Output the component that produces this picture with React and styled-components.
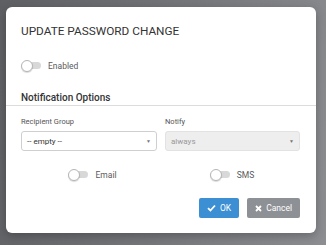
import React, { useState } from 'react';
import styled, { createGlobalStyle } from 'styled-components';

const GlobalStyle = createGlobalStyle`
    html, body {
        margin: 0;
        padding: 0;
        width: 326px;
        height: 245px;
        overflow: hidden;
    }
    body {
        background: linear-gradient(100deg, #5e5f63 0%, #77787c 55%, #8d8e92 100%);
        font-family: Roboto, "Liberation Sans", sans-serif;
    }
`;

const Overlay = styled.div`
    padding: 7px 10px 12px 6px;
`;

const Modal = styled.div`
    width: 310px;
    height: 226px;
    box-sizing: border-box;
    background: #fff;
    border-radius: 6px;
    box-shadow: 0 3px 10px rgba(0, 0, 0, 0.25);
    display: flex;
    flex-direction: column;
`;

const Title = styled.h3`
    margin: 0;
    padding: 16px 15px 0;
    font-size: 11.8px;
    line-height: 16px;
    font-weight: 400;
    color: #333;
`;

const ToggleRow = styled.div`
    display: flex;
    align-items: center;
    gap: 7px;
    padding: ${({ pad }) => pad || '0'};
    justify-content: ${({ center }) => (center ? 'center' : 'flex-start')};
`;

const Track = styled.span`
    position: relative;
    display: inline-block;
    width: 20px;
    height: 11px;
`;

const TrackBar = styled.span`
    position: absolute;
    left: 2px;
    right: 0;
    top: 2px;
    height: 7px;
    border-radius: 4px;
    background: #d8d8d8;
`;

const Knob = styled.span`
    position: absolute;
    left: 0;
    top: 0;
    width: 10px;
    height: 10px;
    border-radius: 50%;
    background: #fff;
    border: 0.5px solid #b5b5b5;
    box-shadow: 0 1px 1px rgba(0, 0, 0, 0.15);
`;

const ToggleLabel = styled.span`
    font-size: 8.5px;
    color: #5a5a5a;
`;

const SectionTitle = styled.div`
    padding: 21px 15px 1px;
    font-size: 10px;
    font-weight: 500;
    color: #333;
    line-height: 12px;
    border-bottom: 1px solid #dcdcdc;
`;

const Fields = styled.div`
    display: grid;
    grid-template-columns: 136px 135px;
    column-gap: 8px;
    padding: 11px 15px 0;
`;

const Field = styled.div`
    display: flex;
    flex-direction: column;
`;

const Label = styled.label`
    font-size: 7.5px;
    color: #555;
    line-height: 10px;
    margin-bottom: 4px;
`;

const Select = styled.div`
    height: 20px;
    box-sizing: border-box;
    border: 1px solid ${({ disabled }) => (disabled ? '#e2e2e2' : '#cfcfcf')};
    background: ${({ disabled }) => (disabled ? '#eeeeee' : '#fff')};
    border-radius: 3px;
    padding: 0 5px;
    display: flex;
    align-items: center;
    justify-content: space-between;
    font-size: 8px;
    color: ${({ disabled }) => (disabled ? '#999' : '#333')};
`;

const Caret = styled.span`
    font-size: 5px;
    color: #777;
`;

const Toggles = styled.div`
    display: grid;
    grid-template-columns: 143px 136px;
    padding: 18px 15px 0;
`;

const Footer = styled.div`
    display: flex;
    justify-content: flex-end;
    gap: 8px;
    padding: 18px 16px 0;
`;

const Button = styled.button`
    height: 20px;
    padding: 0 8px;
    border: none;
    border-radius: 2px;
    background: ${({ primary }) => (primary ? '#3b8fd2' : '#8d9095')};
    color: #fff;
    font-family: Roboto, "Liberation Sans", sans-serif;
    font-size: 8.5px;
    display: flex;
    align-items: center;
    gap: 4px;
    cursor: pointer;
`;

const Toggle = ({ label }) => (
    <>
        <Track>
            <TrackBar />
            <Knob />
        </Track>
        <ToggleLabel>{label}</ToggleLabel>
    </>
);

const App = () => {
    const [group] = useState('-- empty --');

    return (
        <>
            <GlobalStyle />
            <Overlay>
                <Modal>
                    <Title>UPDATE PASSWORD CHANGE</Title>
                    <ToggleRow pad="21px 15px 0">
                        <Toggle label="Enabled" />
                    </ToggleRow>
                    <SectionTitle>Notification Options</SectionTitle>
                    <Fields>
                        <Field>
                            <Label>Recipient Group</Label>
                            <Select>
                                {group}
                                <Caret>▼</Caret>
                            </Select>
                        </Field>
                        <Field>
                            <Label>Notify</Label>
                            <Select disabled>
                                always
                                <Caret>▼</Caret>
                            </Select>
                        </Field>
                    </Fields>
                    <Toggles>
                        <ToggleRow center>
                            <Toggle label="Email" />
                        </ToggleRow>
                        <ToggleRow center>
                            <Toggle label="SMS" />
                        </ToggleRow>
                    </Toggles>
                    <Footer>
                        <Button primary>
                            <svg width="9" height="8" viewBox="0 0 9 8">
                                <path d="M1 4.2 L3.4 6.5 L8 1.5" stroke="#fff" strokeWidth="1.8" fill="none" />
                            </svg>
                            OK
                        </Button>
                        <Button>
                            <svg width="7" height="7" viewBox="0 0 7 7">
                                <path d="M1 1 L6 6 M6 1 L1 6" stroke="#fff" strokeWidth="1.8" fill="none" />
                            </svg>
                            Cancel
                        </Button>
                    </Footer>
                </Modal>
            </Overlay>
        </>
    );
};

export default App;
